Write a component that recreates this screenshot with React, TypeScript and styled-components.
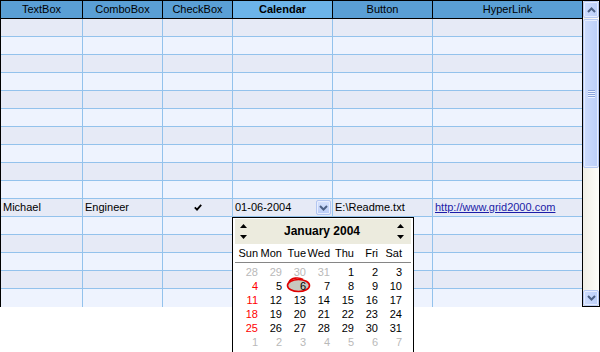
import styled, { createGlobalStyle } from "styled-components";

const GlobalStyle = createGlobalStyle`
    html {
        overflow: hidden;
    }
    html, body {
        margin: 0;
        padding: 0;
        background: #fff;
    }
    body {
        min-height: 352px;
        font-family: "Liberation Sans", Arial, sans-serif;
        font-size: 11px;
        color: #000;
    }
`;

// grid frame: table + scrollbar
const Frame = styled.div`
    display: flex;
    width: 600px;
    height: 307px;
    box-sizing: border-box;
    border: 1px solid #000;
    background: #fff;
`;
const Table = styled.div`
    width: 582px;
    box-sizing: border-box;
    border-right: 1px solid #000;
`;
const cols = "82px 80px 70px 100px 100px 149px";
const HeaderRow = styled.div`
    display: grid;
    grid-template-columns: ${cols};
    height: 18px;
    box-sizing: border-box;
    border-bottom: 1px solid #000;
`;
const HeaderCell = styled.div<{ $active?: boolean; $last?: boolean }>`
    background: ${(p) => (p.$active ? "#6cb4e9" : "#5a9fd5")};
    border-right: ${(p) => (p.$last ? "none" : "1px solid #000")};
    font-weight: ${(p) => (p.$active ? "bold" : "normal")};
    text-align: center;
    line-height: 17px;
    white-space: nowrap;
`;
const Row = styled.div<{ $even: boolean; $last: boolean }>`
    display: grid;
    grid-template-columns: ${cols};
    height: 18px;
    box-sizing: border-box;
    border-bottom: ${(p) => (p.$last ? "none" : "1px solid #93c2ec")};
    background: ${(p) => (p.$even ? "#e6eaf6" : "#eef3fe")};
`;
const Cell = styled.div<{ $last?: boolean; $center?: boolean }>`
    position: relative;
    display: flex;
    align-items: center;
    justify-content: ${(p) => (p.$center ? "center" : "space-between")};
    padding: 0 1px 0 2px;
    border-right: ${(p) => (p.$last ? "none" : "1px solid #93c2ec")};
    line-height: 17px;
    white-space: nowrap;
`;
const Link = styled.a`
    color: #1c1ca8;
    text-decoration: underline;
`;
const ComboButton = styled.div`
    width: 15px;
    height: 15px;
    box-sizing: border-box;
    border: 1px solid #b3c6f1;
    border-radius: 2px;
    background: linear-gradient(#d8e3fd, #b9ccf7);
    box-shadow: inset 0 0 0 1px #e9effe;
    display: flex;
    align-items: center;
    justify-content: center;
`;

// scrollbar
const ScrollBar = styled.div`
    width: 16px;
    display: flex;
    flex-direction: column;
    background: linear-gradient(to right, #f1efe6, #fdfdfa);
`;
const ScrollButton = styled.div<{ $h: number }>`
    height: ${(p) => p.$h}px;
    box-sizing: border-box;
    border: 1px solid #b7c9f2;
    border-radius: 2px;
    background: linear-gradient(to right, #cddcfd, #bccff9);
    box-shadow: inset 0 0 0 1px #e6edfe;
    display: flex;
    align-items: center;
    justify-content: center;
`;
const Thumb = styled(ScrollButton)`
    margin-top: 1px;
    flex-direction: column;
    gap: 1px;
`;
const Grip = styled.div`
    width: 7px;
    height: 1px;
    background: #8ca5dc;
    box-shadow: 0 1px 0 #eef3ff;
`;
const Track = styled.div`
    flex: 1;
`;

// calendar dropdown
const Popup = styled.div`
    position: absolute;
    top: calc(100% + 1px);
    left: -1px;
    z-index: 5;
    width: 182px;
    box-sizing: border-box;
    border: 1px solid #000;
    background: #fff;
    padding: 1px 2px 4px;
`;
const MonthBar = styled.div`
    height: 25px;
    background: #ecebde;
    display: flex;
    align-items: center;
    justify-content: space-between;
    padding: 0 7px 0 5px;
`;
const MonthTitle = styled.div`
    font-size: 12px;
    font-weight: bold;
`;
const Spinner = styled.div`
    display: flex;
    flex-direction: column;
    gap: 7px;
`;
const DayNames = styled.div`
    display: grid;
    grid-template-columns: repeat(7, 24px);
    height: 19px;
    box-sizing: border-box;
    border-bottom: 1px solid #868686;
    line-height: 18px;
`;
const DayName = styled.div`
    text-align: right;
    padding-right: 1px;
`;
const Days = styled.div`
    display: grid;
    grid-template-columns: repeat(7, 24px);
    padding-top: 2px;
    line-height: 14px;
`;
const Day = styled.div<{ $tone: "other" | "sun" | "normal" }>`
    position: relative;
    text-align: right;
    padding-right: 1px;
    color: ${(p) =>
        p.$tone === "other" ? "#b9b9b9" : p.$tone === "sun" ? "#ff0000" : "#000"};
`;
const DayText = styled.span`
    position: relative;
    z-index: 1;
`;
const TodayMark = styled.svg`
    position: absolute;
    left: 3px;
    top: -2px;
    overflow: visible;
`;

const headers = ["TextBox", "ComboBox", "CheckBox", "Calendar", "Button", "HyperLink"];
const dayNames = ["Sun", "Mon", "Tue", "Wed", "Thu", "Fri", "Sat"];

// january 2004 with neighbouring days
const days: { n: number; other: boolean }[] = [
    ...[28, 29, 30, 31].map((n) => ({ n, other: true })),
    ...Array.from({ length: 31 }, (_, i) => ({ n: i + 1, other: false })),
    ...[1, 2, 3, 4, 5, 6, 7].map((n) => ({ n, other: true })),
];

const Chevron = ({ down }: { down?: boolean }) => (
    <svg width="9" height="6" viewBox="0 0 9 6">
        <path
            d={down ? "M1 1 L4.5 4.5 L8 1" : "M1 5 L4.5 1.5 L8 5"}
            fill="none"
            stroke="#4d6185"
            strokeWidth="2"
        />
    </svg>
);

const Triangle = ({ down }: { down?: boolean }) => (
    <svg width="7" height="4" viewBox="0 0 7 4">
        <path d={down ? "M0 0 H7 L3.5 4 Z" : "M0 4 H7 L3.5 0 Z"} fill="#000" />
    </svg>
);

function Calendar() {
    return (
        <Popup>
            <MonthBar>
                <Spinner>
                    <Triangle />
                    <Triangle down />
                </Spinner>
                <MonthTitle>January 2004</MonthTitle>
                <Spinner>
                    <Triangle />
                    <Triangle down />
                </Spinner>
            </MonthBar>
            <DayNames>
                {dayNames.map((d) => (
                    <DayName key={d}>{d}</DayName>
                ))}
            </DayNames>
            <Days>
                {days.map((d, i) => {
                    const tone = d.other ? "other" : i % 7 === 0 ? "sun" : "normal";
                    const today = !d.other && d.n === 6;
                    return (
                        <Day key={i} $tone={tone}>
                            {today && (
                                <TodayMark width="26" height="18">
                                    <ellipse
                                        cx="12.5"
                                        cy="8.5"
                                        rx="11"
                                        ry="6"
                                        fill="#c8c8bf"
                                        stroke="#e00000"
                                        strokeWidth="1.6"
                                    />
                                    <path
                                        d="M3 5 C 5 0.5, 13 0, 17 2.5"
                                        fill="none"
                                        stroke="#e00000"
                                        strokeWidth="1.6"
                                    />
                                </TodayMark>
                            )}
                            <DayText>{d.n}</DayText>
                        </Day>
                    );
                })}
            </Days>
        </Popup>
    );
}

function App() {
    const rows = Array.from({ length: 16 }, (_, i) => i);
    return (
        <>
            <GlobalStyle />
            <Frame>
                <Table>
                    <HeaderRow>
                        {headers.map((h, i) => (
                            <HeaderCell
                                key={h}
                                $active={h === "Calendar"}
                                $last={i === headers.length - 1}
                            >
                                {h}
                            </HeaderCell>
                        ))}
                    </HeaderRow>
                    {rows.map((r) =>
                        r === 10 ? (
                            <Row key={r} $even={r % 2 === 0} $last={r === 15}>
                                <Cell>Michael</Cell>
                                <Cell>Engineer</Cell>
                                <Cell $center>
                                    <svg width="8" height="7" viewBox="0 0 8 7">
                                        <path
                                            d="M0.8 3.4 L3 5.6 L7.2 0.8"
                                            fill="none"
                                            stroke="#000"
                                            strokeWidth="1.8"
                                        />
                                    </svg>
                                </Cell>
                                <Cell>
                                    01-06-2004
                                    <ComboButton>
                                        <Chevron down />
                                    </ComboButton>
                                    <Calendar />
                                </Cell>
                                <Cell>E:\Readme.txt</Cell>
                                <Cell $last>
                                    <Link>http://www.grid2000.com</Link>
                                </Cell>
                            </Row>
                        ) : (
                            <Row key={r} $even={r % 2 === 0} $last={r === 15}>
                                {headers.map((h, i) => (
                                    <Cell key={h} $last={i === headers.length - 1} />
                                ))}
                            </Row>
                        )
                    )}
                </Table>
                <ScrollBar>
                    <ScrollButton $h={17}>
                        <Chevron />
                    </ScrollButton>
                    <Thumb $h={149}>
                        <Grip />
                        <Grip />
                        <Grip />
                        <Grip />
                    </Thumb>
                    <Track />
                    <ScrollButton $h={16}>
                        <Chevron down />
                    </ScrollButton>
                </ScrollBar>
            </Frame>
        </>
    );
}

export default App;
